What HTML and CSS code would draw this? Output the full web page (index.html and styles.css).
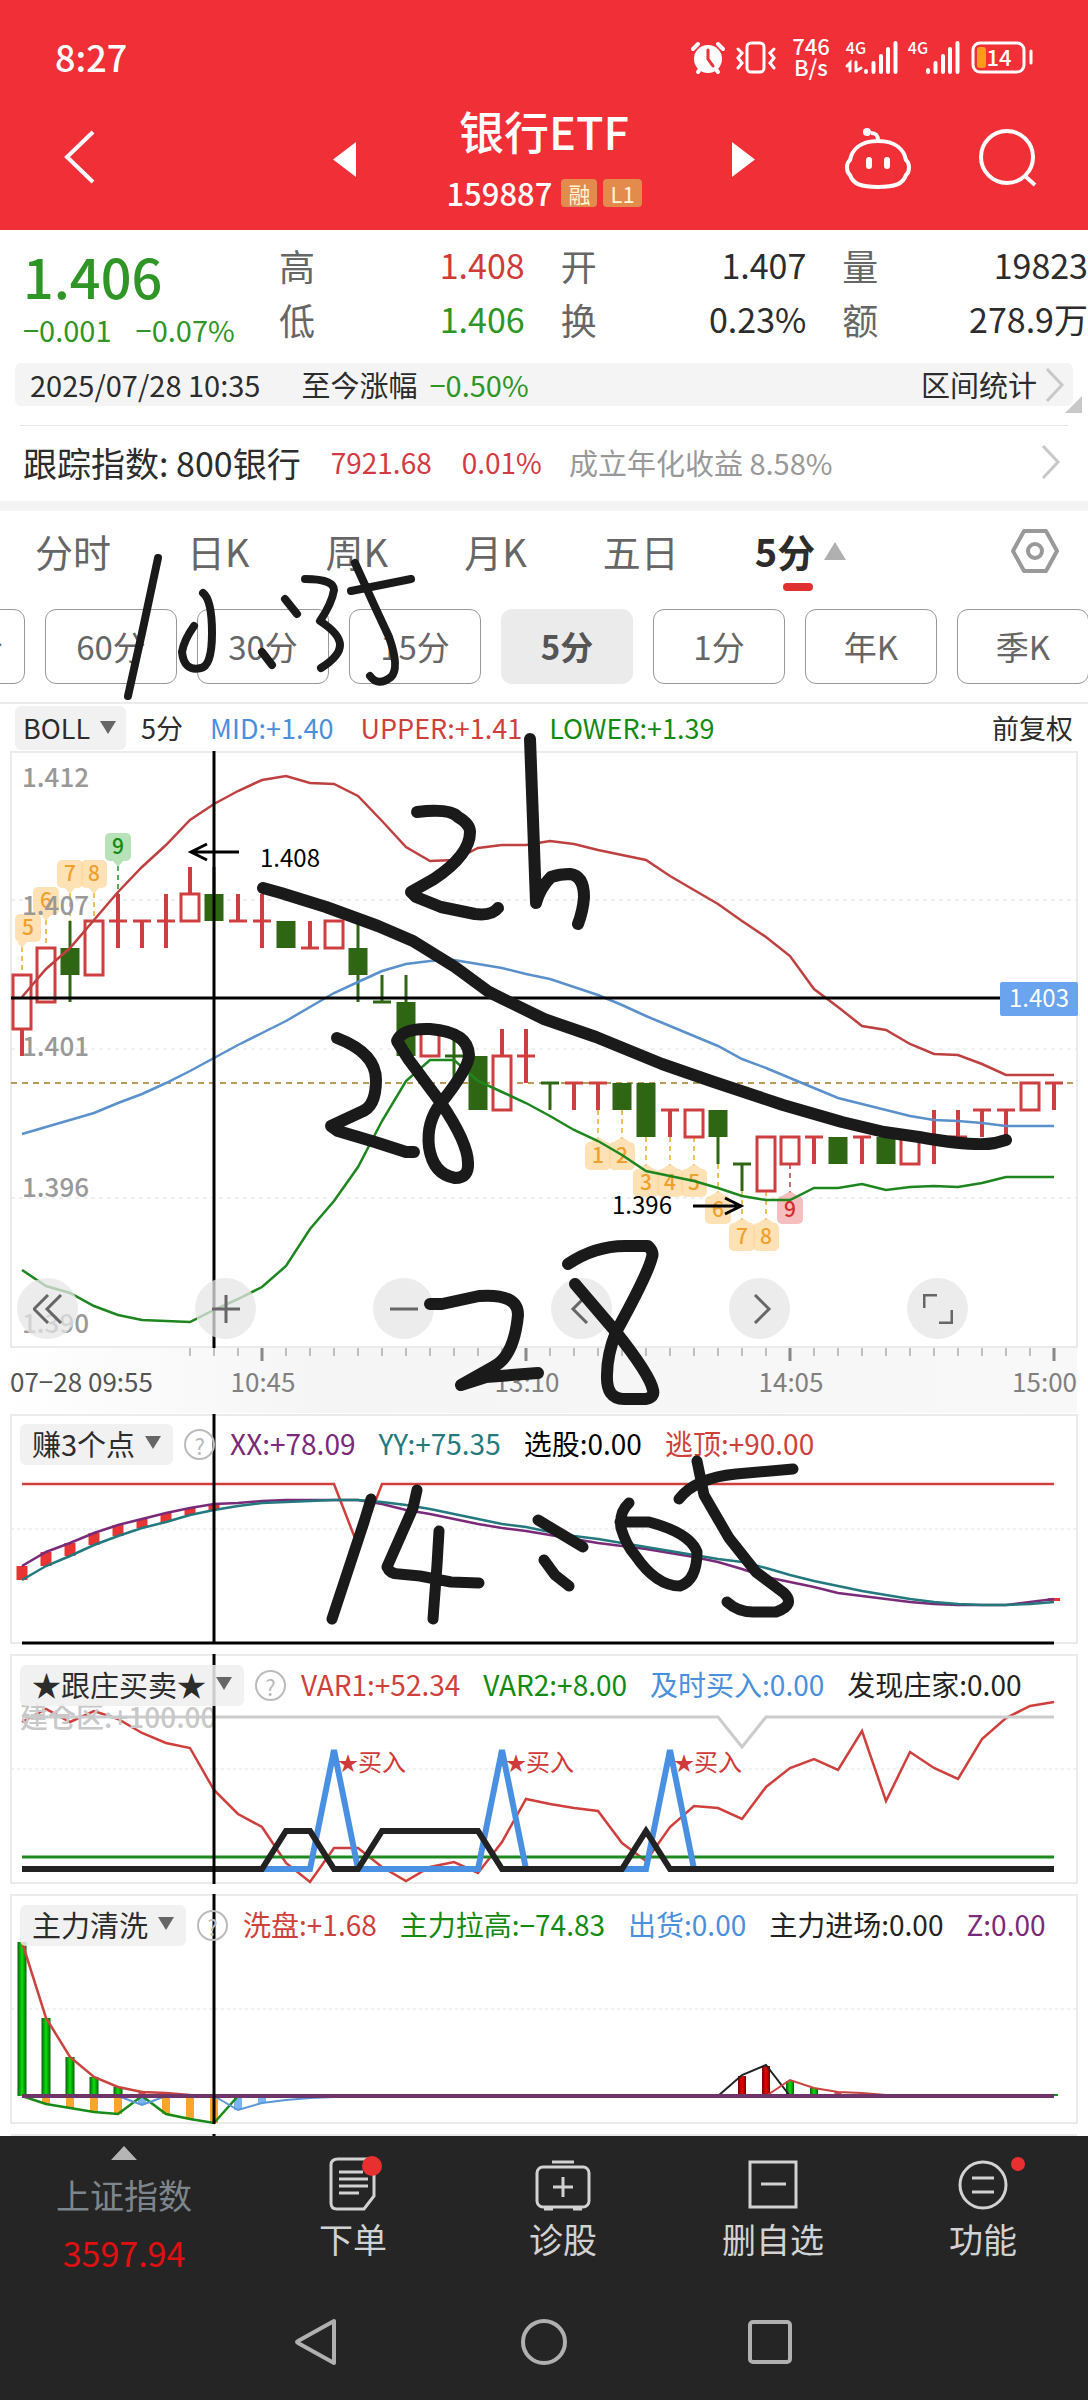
FILE: index.html
```html
<!DOCTYPE html>
<html lang="zh-CN">
<head>
<meta charset="utf-8">
<meta name="viewport" content="width=device-width, initial-scale=1">
<title>银行ETF 159887</title>
<link rel="stylesheet" href="styles.css">
</head>
<body>
<div class="page">
  <header class="header">
    <div class="status">
      <span class="clock">8:27</span>
      <svg class="status-icons" viewBox="680 30 360 56" aria-label="手机状态">
        <g fill="#fff" stroke="#fff" stroke-linecap="round">
          <circle cx="708" cy="59" r="14" stroke="none"/>
          <path d="M693 49l5-5M723 49l-5-5M698 72l3-4M718 72l-3-4" stroke-width="4"/>
          <path d="M708 50v9l5 7" fill="none" stroke="#f12f37" stroke-width="3"/>
          <g fill="none" stroke-width="3"><rect x="747" y="43" width="17" height="29" rx="4"/><path d="M738 49l4 4-4 5 4 5-4 5M774 49l-4 4 4 5-4 5 4 5" stroke-width="3"/></g>
          <path d="M866 71v1M873.500 63v9M881 56v16M888 49v23M895.500 43v29M928 70v2M935.500 63v9M943 56v16M950 49v23M957.500 43v29" stroke-width="4"/>
          <path d="M850 71v-8l-3 3M856 62v9M856 71l5-3" fill="none" stroke-width="3"/>
          <g fill="none" stroke-width="3"><rect x="973" y="43" width="51" height="29" rx="7"/><path d="M1031 51v12"/></g>
        </g>
        <rect x="977" y="47" width="9" height="21" rx="3" fill="#ff9a1f"/>
        <g class="status-text"><text x="811" y="55" class="t22">746</text><text x="811" y="76" class="t22">B/s</text><text x="856" y="54" class="t16">4G</text><text x="918" y="54" class="t16">4G</text><text x="999" y="66" class="t22">14</text></g>
      </svg>
    </div>
    <nav class="titlebar">
      <div class="title-left">
        <button class="icon-btn" aria-label="返回"><svg width="32" height="54" viewBox="0 0 32 54"><path d="M29 2L3 27l26 25" fill="none" stroke="#fff" stroke-width="4"/></svg></button>
      </div>
      <div class="title-mid">
        <button class="icon-btn" aria-label="上一只"><svg width="23" height="35" viewBox="0 0 23 35"><path d="M23 0v35L0 17.500z" fill="#fff"/></svg></button>
        <div class="title-text">
          <h1>银行ETF</h1>
          <div class="code"><span>159887</span><i class="badge">融</i><i class="badge">L1</i></div>
        </div>
        <button class="icon-btn" aria-label="下一只"><svg width="23" height="35" viewBox="0 0 23 35"><path d="M0 0v35l23-17.500z" fill="#fff"/></svg></button>
      </div>
      <div class="title-right">
        <button class="icon-btn" aria-label="智能助手"><svg width="68" height="62" viewBox="0 0 68 62"><g fill="none" stroke="#fff" stroke-width="4"><path d="M34 14c-18 0-26 9-28 19-4 3-4 12 0 15 3 9 11 12 28 12s25-3 28-12c4-3 4-12 0-15-2-10-10-19-28-19zM34 14c0-6-2-8-7-8"/><path d="M25 33v6M43 33v6" stroke-width="6" stroke-linecap="round"/></g><circle cx="23" cy="5" r="4" fill="#fff"/></svg></button>
        <button class="icon-btn" aria-label="搜索"><svg width="60" height="60" viewBox="0 0 60 60"><circle cx="29" cy="29" r="26" fill="none" stroke="#fff" stroke-width="4"/><path d="M47 48l10 9" stroke="#fff" stroke-width="4"/></svg></button>
      </div>
    </nav>
  </header>

  <section class="quote">
    <div class="price">
      <strong>1.406</strong>
      <div class="change"><span>−0.001</span><span>−0.07%</span></div>
    </div>
    <dl class="stats">
      <div><dt>高</dt><dd class="up">1.408</dd></div>
      <div><dt>开</dt><dd>1.407</dd></div>
      <div><dt>量</dt><dd>19823</dd></div>
      <div><dt>低</dt><dd class="down">1.406</dd></div>
      <div><dt>换</dt><dd>0.23%</dd></div>
      <div><dt>额</dt><dd>278.9万</dd></div>
    </dl>
  </section>

  <a class="range" href="#range">
    <span>2025/07/28 10:35</span>
    <span class="range-label">至今涨幅</span>
    <span class="down">−0.50%</span>
    <span class="push">区间统计</span>
    <svg width="20" height="34" viewBox="0 0 20 34"><path d="M2 1l15 16L2 33" fill="none" stroke="#c8c8c8" stroke-width="3"/></svg>
    <svg class="corner" width="17" height="17" viewBox="0 0 17 17"><path d="M17 0v17H0z" fill="#c8c8c8"/></svg>
  </a>

  <a class="track" href="#index">
    <span class="track-name">跟踪指数: 800银行</span>
    <span class="track-val">7921.68</span>
    <span class="track-pct">0.01%</span>
    <span class="track-year">成立年化收益 8.58%</span>
    <svg width="20" height="34" viewBox="0 0 20 34"><path d="M2 1l15 16L2 33" fill="none" stroke="#c8c8c8" stroke-width="3"/></svg>
  </a>

  <nav class="tabs">
    <button>分时</button><button>日K</button><button>周K</button><button>月K</button><button>五日</button>
    <button class="active">5分<svg width="22" height="18" viewBox="0 0 22 18"><path d="M11 0l11 18H0z" fill="#b0b0b0"/></svg></button>
    <button class="settings" aria-label="设置"><svg width="48" height="44" viewBox="0 0 48 44"><g fill="none" stroke="#999" stroke-width="4" stroke-linejoin="round"><path d="M13 2h22l11 20-11 20H13L2 22z"/><circle cx="24" cy="22" r="7"/></g></svg></button>
  </nav>

  <div class="periods">
    <button>120分</button><button>60分</button><button>30分</button><button>15分</button><button class="on">5分</button><button>1分</button><button>年K</button><button>季K</button>
  </div>

  <div class="boll">
    <button class="tag">BOLL<span class="caret"></span></button>
    <span>5分</span>
    <span class="c-blue">MID:+1.40</span>
    <span class="c-red">UPPER:+1.41</span>
    <span class="c-green">LOWER:+1.39</span>
    <span class="push">前复权</span>
  </div>

  <section class="main-chart">
    <svg id="kline" class="chart" viewBox="0 750 1088 663" aria-label="5分钟K线"></svg>
    <div class="tools">
      <button aria-label="最左"><svg viewBox="0 0 30 30"><path d="M15 1L1 15l14 14M28 1L14 15l14 14"/></svg></button>
      <button aria-label="放大"><svg viewBox="0 0 30 30"><path d="M1 15h28M15 1v28"/></svg></button>
      <button aria-label="缩小"><svg viewBox="0 0 30 30"><path d="M1 15h28"/></svg></button>
      <button aria-label="向左"><svg viewBox="0 0 30 30"><path d="M20 1L6 15l14 14"/></svg></button>
      <button aria-label="向右"><svg viewBox="0 0 30 30"><path d="M10 1l14 14-14 14"/></svg></button>
      <button aria-label="全屏"><svg viewBox="0 0 30 30"><path d="M1 14V1h13M29 16v13H16"/></svg></button>
    </div>
  </section>

  <section class="panel">
    <svg id="ind1" class="chart" viewBox="0 1413 1088 241" aria-label="赚3个点"></svg>
    <div class="legend">
      <button class="tag">赚3个点<span class="caret"></span></button><button class="help" aria-label="说明">?</button>
      <span class="c-purple">XX:+78.09</span><span class="c-teal">YY:+75.35</span><span class="c-black">选股:0.00</span><span class="c-red">逃顶:+90.00</span>
    </div>
  </section>

  <section class="panel">
    <svg id="ind2" class="chart" viewBox="0 1654 1088 240" aria-label="跟庄买卖"></svg>
    <div class="legend">
      <button class="tag">★跟庄买卖★<span class="caret"></span></button><button class="help" aria-label="说明">?</button>
      <span class="c-red">VAR1:+52.34</span><span class="c-green">VAR2:+8.00</span><span class="c-blue">及时买入:0.00</span><span class="c-dark">发现庄家:0.00</span>
    </div>
  </section>

  <section class="panel">
    <svg id="ind3" class="chart" viewBox="0 1894 1088 242" aria-label="主力清洗"></svg>
    <div class="legend">
      <button class="tag">主力清洗<span class="caret"></span></button><button class="help" aria-label="说明">?</button>
      <span class="c-red">洗盘:+1.68</span><span class="c-green">主力拉高:−74.83</span><span class="c-blue">出货:0.00</span><span class="c-dark">主力进场:0.00</span><span class="c-purple">Z:0.00</span>
    </div>
  </section>

  <footer class="footer">
    <nav class="actions">
      <a class="index" href="#sh"><svg width="26" height="14" viewBox="0 0 26 14"><path d="M13 0l13 14H0z" fill="#b5b5b5"/></svg><span>上证指数</span><b>3597.94</b></a>
      <a href="#order"><svg width="60" height="60" viewBox="0 0 60 60"><g fill="none" stroke="#d2d2d2" stroke-width="3"><path d="M15 5h30q6 0 6 6v31L41 55H14q-6 0-6-6V11q0-6 7-6z"/><path d="M16 18h24M16 25h29M16 32h29M16 39h20"/></g><circle cx="49" cy="12" r="10" fill="#e93030"/></svg><span>下单</span></a>
      <a href="#diagnose"><svg width="60" height="60" viewBox="0 0 60 60"><g fill="none" stroke="#d2d2d2" stroke-width="3"><rect x="4" y="13" width="52" height="40" rx="6"/><path d="M19 8h22M30 23v20M20 33h20M11 55h9M40 55h9"/></g></svg><span>诊股</span></a>
      <a href="#remove"><svg width="60" height="60" viewBox="0 0 60 60"><path d="M7 8h46v45H7zM18 30h25" fill="none" stroke="#d2d2d2" stroke-width="3"/></svg><span>删自选</span></a>
      <a href="#more"><svg width="90" height="60" viewBox="0 0 90 60"><g fill="none" stroke="#d2d2d2" stroke-width="3"><circle cx="45" cy="31" r="23"/><path d="M34 24h22M34 38h22"/></g><circle cx="80" cy="10" r="7" fill="#e93030"/></svg><span>功能</span></a>
    </nav>
    <nav class="system">
      <button class="icon-btn" aria-label="后退"><svg width="48" height="48" viewBox="0 0 48 48"><path d="M40 3v42L4 25q-2-1 0-2z" fill="none" stroke="#b0b0b0" stroke-width="4" stroke-linejoin="round"/></svg></button>
      <button class="icon-btn" aria-label="主页"><svg width="48" height="48" viewBox="0 0 48 48"><circle cx="24" cy="24" r="21" fill="none" stroke="#b0b0b0" stroke-width="4"/></svg></button>
      <button class="icon-btn" aria-label="最近任务"><svg width="48" height="48" viewBox="0 0 48 48"><rect x="4" y="4" width="40" height="40" rx="3" fill="none" stroke="#b0b0b0" stroke-width="4"/></svg></button>
    </nav>
  </footer>

  <svg class="ink" viewBox="0 0 1088 2400" aria-hidden="true">
    <g stroke-width="8">
      <path d="M158 558L142 633 128 696"/>
      <path d="M203 593Q212 600 212 633T201 668Q184 672 182 652 184 640 194 626"/>
      <path d="M285 599L297 614M262 652L272 665"/>
      <path d="M305 579Q334 579 334 590 332 603 320 621 340 634 340 645T321 668"/>
      <path d="M355 563L375 607 389 637Q400 668 391 677 378 687 370 676M351 591L411 579"/>
    </g>
    <g stroke-width="11">
      <path d="M371 1499L364 1522 332 1619M417 1490L413 1508 387 1567Q390 1574 399 1574L420 1576 451 1582 479 1583M439 1531L437 1565 433 1619"/>
      <path d="M538 1520L583 1547M544 1560L555 1575 569 1586"/>
      <path d="M629 1503Q619 1512 621 1528 626 1545 635 1555 656 1586 680 1586 697 1580 697 1552 690 1533 649 1522L620 1522"/>
      <path d="M697 1461L704 1495 729 1538 756 1572 784 1593Q796 1605 776 1612H753Q738 1612 727 1602M679 1499Q695 1478 736 1474L793 1469"/>
    </g>
    <g stroke-width="12">
      <path d="M530 739L533 820 536 903Q540 888 551 877 560 874 570 874 584 876 584 897 583 911 578 924"/>
      <path d="M417 812Q450 808 458 817 470 824 470 832 470 855 434 879L411 892 416 897 441 907 475 914Q492 916 498 908"/>
      <path d="M263 888L281 893 326 907 378 926 413 941 455 967 489 992 544 1019 596 1037 662 1064 711 1081 783 1105 842 1122 884 1132 919 1137Q975 1147 995 1143L1006 1140"/>
      <path d="M337 1038Q376 1053 376 1080T361 1112L331 1126 338 1131 375 1142 406 1152H414"/>
      <path d="M397 1041Q402 1028 430 1029 468 1032 469 1055 469 1068 441 1103 426 1122 429 1147 433 1174 455 1178 469 1178 468 1163 468 1143 441 1103L409 1060z"/>
      <path d="M430 1304H442L479 1296Q518 1293 518 1315 514 1357 493 1367L461 1385 486 1377 538 1373"/>
      <path d="M568 1264Q595 1246 625 1246H648Q654 1252 652 1257 648 1274 616 1332 607 1355 607 1375 606 1399 624 1399H646Q655 1397 653 1390 650 1375 616 1332L575 1284"/>
    </g>
  </svg>
</div>
<script src="charts.js"></script>
</body>
</html>
```
FILE: styles.css
```css
* { box-sizing: border-box; }

body {
  margin: 0;
  background: #fff;
  color: #2c2c2c;
  font-family: "Noto Sans CJK SC", sans-serif;
}

.page { position: relative; overflow: hidden; }

button {
  margin: 0;
  padding: 0;
  border: 0;
  background: none;
  color: inherit;
  font: inherit;
}

a { color: inherit; text-decoration: none; }
svg { display: block; flex: none; }
.icon-btn { display: flex; }
.push { margin-left: auto; }

.up { color: #cf3a3a; }
.down { color: #2f9526; }
.c-red { color: #cf3f3c; }
.c-green { color: #138a13; }
.c-blue { color: #4a8fdc; }
.c-purple { color: #7a2a78; }
.c-teal { color: #23797e; }
.c-dark { color: #222; }
.c-black { color: #000; }

/* header */
.header { height: 230px; background: #f12f37; color: #fff; }

.status {
  display: flex;
  justify-content: space-between;
  align-items: flex-start;
  padding: 30px 48px 0 55px;
}
.clock { font-size: 36px; line-height: 52px; font-weight: 500; }
.status-icons { width: 360px; height: 56px; }
.status-text { fill: #fff; text-anchor: middle; font-weight: 500; }
.t22 { font-size: 22px; }
.t16 { font-size: 16px; }

.titlebar { display: grid; grid-template-columns: 1fr 422px 1fr; height: 144px; }
.title-left { display: flex; align-items: center; padding: 0 0 2px 64px; }
.title-mid { display: flex; align-items: center; justify-content: space-between; padding-top: 2px; }
.title-right { display: flex; align-items: center; justify-content: flex-end; gap: 66px; padding: 0 50px 0 0; }
.title-text { text-align: center; margin-top: 4px; }
.title-mid h1 { margin: 0; font-size: 45px; line-height: 64px; font-weight: 500; }
.code { display: flex; align-items: center; justify-content: center; gap: 6px; font-size: 31px; line-height: 60px; font-weight: 500; }
.code span { margin-right: 3px; }
.badge {
  padding: 0 7px;
  border-radius: 4px;
  background: #e38b4d;
  color: #fff3d6;
  font-size: 22px;
  line-height: 28px;
  font-style: normal;
  font-weight: 400;
}

/* quote */
.quote { display: flex; height: 133px; padding-top: 8px; }
.price { width: 279px; flex: none; padding-left: 23px; color: #2f9526; }
.price strong { display: block; font-size: 54px; line-height: 75px; font-weight: 500; }
.change { display: flex; gap: 24px; font-size: 29px; line-height: 32px; }
.stats {
  flex: 1;
  display: grid;
  grid-template-columns: repeat(3, 1fr);
  column-gap: 36px;
  align-content: start;
  margin: 0;
  line-height: 54px;
}
.stats div { display: flex; justify-content: space-between; }
.stats dt { font-size: 36px; color: #666; }
.stats dd { margin: 0; font-size: 34px; }

.range {
  position: relative;
  display: flex;
  align-items: center;
  height: 43px;
  margin: 0 15px;
  padding: 0 8px 0 15px;
  border-radius: 6px;
  background: #f4f4f4;
  font-size: 29px;
  line-height: 40px;
}
.range > span { padding-bottom: 2px; }
.range-label { margin: 0 12px 0 41px; }
.range > svg { margin-left: 8px; }
.range .corner { position: absolute; right: -9px; bottom: -7px; }

.track {
  display: flex;
  align-items: center;
  height: 105px;
  padding: 17px 27px 0 23px;
  background: linear-gradient(#e6e6e6, #e6e6e6) center 19px / calc(100% - 40px) 1px no-repeat;
  border-bottom: 10px solid #f4f4f4;
  font-size: 28px;
}
.track-name { font-size: 34px; }
.track-val { margin-left: 30px; color: #d43a44; }
.track-pct { margin-left: 30px; color: #d43a44; }
.track-year { margin: 0 auto 0 27px; color: #999; font-size: 29px; }

/* tabs */
.tabs {
  display: flex;
  align-items: center;
  gap: 76px;
  height: 98px;
  padding: 0 29px 19px 35px;
  color: #666;
  font-size: 38px;
  line-height: 50px;
}
.tabs .active {
  position: relative;
  display: flex;
  align-items: center;
  gap: 9px;
  color: #2c2c2c;
  font-weight: 700;
}
.tabs .active::after {
  content: "";
  position: absolute;
  left: 28px;
  bottom: -15px;
  width: 30px;
  height: 8px;
  border-radius: 4px;
  background: #e03131;
}
.tabs .settings { margin-left: auto; }

.periods {
  display: grid;
  grid-template-columns: repeat(8, 132px);
  gap: 20px;
  height: 93px;
  margin-left: -107px;
  align-items: start;
}
.periods button {
  height: 75px;
  border: 1px solid #999;
  border-radius: 11px;
  color: #666;
  font-size: 33px;
  line-height: 73px;
}
.periods .on { border-color: #ebebeb; background: #ebebeb; color: #555; font-weight: 700; }

.boll {
  display: flex;
  align-items: center;
  gap: 27px;
  height: 48px;
  padding: 1px 15px 0;
  border-top: 2px solid #ebebeb;
  font-size: 27px;
}
.boll > span:nth-child(2) { margin-left: -12px; }
.boll .tag { height: 44px; padding: 0 10px 0 8px; }

.tag {
  display: flex;
  align-items: center;
  gap: 10px;
  height: 41px;
  padding: 0 12px;
  border-radius: 6px;
  background: rgb(238 238 238 / 85%);
}
.caret { border: 8px solid transparent; border-top: 13px solid #666; border-bottom: 0; }

/* charts */
.chart { width: 100%; height: auto; }
.chart text { font-family: "Noto Sans CJK SC", sans-serif; }
.axis-label { fill: #999; font-size: 26px; font-weight: 500; }
.time-label { fill: #808080; font-size: 26px; }
.first { fill: #555; }
.mark { font-size: 24px; }
.count { font-size: 21px; font-weight: 500; text-anchor: middle; }
.signal { fill: #cf3a3a; font-size: 24px; }
.zone { fill: #c8c8c8; font-size: 28px; font-weight: 500; }

.main-chart { position: relative; }
.tools { position: absolute; left: 17px; bottom: 74px; display: flex; gap: 117px; }
.tools button {
  display: grid;
  place-items: center;
  width: 61px;
  height: 61px;
  border-radius: 50%;
  background: rgb(230 230 230 / 75%);
}
.tools svg { width: 30px; height: 30px; fill: none; stroke: #666; stroke-width: 3; }

.panel { display: grid; }
.panel > * { grid-area: 1 / 1; min-width: 0; }
.legend {
  display: flex;
  align-items: center;
  gap: 23px;
  height: 41px;
  margin: 11px 0 0 20px;
  font-size: 28px;
  line-height: 36px;
  white-space: nowrap;
}
.legend > span { padding-bottom: 4px; }
.legend .tag { padding-bottom: 4px; font-size: 29px; }
.help {
  width: 31px;
  height: 31px;
  margin: 0 -8px 0 -12px;
  border: 2px solid #bbb;
  border-radius: 50%;
  color: #bbb;
  font-size: 22px;
  line-height: 26px;
}

/* footer */
.footer { background: #252525; color: #d2d2d2; }
.actions { display: grid; grid-template-columns: 248px repeat(4, 1fr); height: 154px; font-size: 34px; }
.actions a { display: flex; flex-direction: column; align-items: center; padding-top: 18px; }
.actions a span { line-height: 50px; }
.actions .index { padding: 10px 0 0; }
.actions .index span { margin-top: 10px; color: #7d868c; }
.actions .index b { margin-top: 8px; color: #e01010; font-weight: 400; line-height: 50px; }
.system { display: flex; justify-content: center; gap: 178px; height: 110px; padding-top: 28px; }

/* handwritten notes over the page */
.ink {
  position: absolute;
  top: 0;
  left: 0;
  width: 100%;
  height: auto;
  fill: none;
  stroke: #1a1a1a;
  stroke-linecap: round;
  stroke-linejoin: round;
  pointer-events: none;
}
```
FILE: charts.js
```js
const X = i => 22 + 24 * i;
const line = (ys, color, w = 2.5, from = 0) =>
  `<polyline points="${ys.map((y, i) => X(i + from) + ',' + y).join(' ')}" fill="none" stroke="${color}" stroke-width="${w}"/>`;
const seg = (x1, y1, x2, y2, color, w = 2, extra = '') =>
  `<line x1="${x1}" y1="${y1}" x2="${x2}" y2="${y2}" stroke="${color}" stroke-width="${w}" ${extra}/>`;
const bar = (i, y1, y2, w, color) =>
  `<rect x="${X(i) - w / 2}" y="${y1}" width="${w}" height="${y2 - y1}" fill="${color}"/>`;
const frame = (y, h) => `<rect x="11" y="${y}" width="1066" height="${h}" fill="none" stroke="#ebebeb" stroke-width="2"/>`;
const RED = '#cf3f3f', GREEN = '#2f6613', UPPER = '#bf4040', BLUE = '#5a90cc', LOWER = '#1e861e';
const draw = (id, parts) => { document.getElementById(id).innerHTML = parts.join(''); };

/* colour, body top, body bottom, high, low in ticks below the day's high */
const candles = [
  'r4647', 'r3535', 'g3425', 'r2424', 'r2213', 'r2223', 'r2213', 'r1202', 'g1202', 'r2212', 'r2213',
  'g2323', 'r3323', 'r2323', 'g3425', 'g5545', 'g5747', 'r6767', 'g7768', 'g7979', 'r7969', 'r7768',
  'g8889', 'r8889', 'r8889', 'g8989', 'g8a8a', 'r999a', 'r9a9a', 'g9a9b', 'gbbbc', 'racac', 'rabab',
  'raaab', 'gabab', 'raaab', 'gabab', 'rabab', 'raa9b', 'raa9a', 'r999a', 'r999a', 'r8989', 'r8889'
];
const K = c => 867 + 27 * parseInt(c, 16);
const candle = (s, i) => {
  const color = s[0] === 'r' ? RED : GREEN, x = X(i);
  const [t, b, h, l] = [1, 2, 3, 4].map(n => K(s[n]));
  let out = '';
  const wick = s[0] === 'r' ? 4 : 3;
  if (h < t) out += seg(x, h, x, t, color, wick);
  if (l > b) out += seg(x, b, x, l, color, wick);
  if (t === b) return out + seg(x - 9, t, x + 9, t, color, 3);
  return out + (s[0] === 'r'
    ? `<rect x="${x - 9}" y="${t}" width="18" height="${b - t}" fill="#fff" stroke="${color}" stroke-width="3"/>`
    : bar(i, t, b, 19, color));
};

const upper = [997,969,948,920,892,867,845,820,804,791,780,776,783,784,796,821,847,861,860,848,845,845,841,844,850,855,860,876,890,904,921,937,956,989,1007,1026,1030,1044,1054,1055,1064,1075,1075,1075];
const mid = [1134,1127,1120,1113,1103,1094,1083,1071,1058,1045,1033,1021,1007,993,982,971,964,961,960,964,968,974,979,987,995,1005,1016,1026,1036,1046,1059,1068,1078,1088,1098,1104,1110,1116,1120,1121,1123,1126,1126,1126];
const lower = [1270,1286,1293,1306,1315,1320,1321,1322,1310,1299,1287,1266,1229,1201,1167,1121,1081,1060,1060,1081,1092,1103,1116,1130,1141,1155,1171,1176,1181,1188,1196,1200,1200,1188,1188,1184,1190,1187,1186,1187,1183,1177,1177,1177];

const tones = {
  o: ['#ffd79e', '#f0a02c', '#e8c060'],
  g: ['#9fd79f', '#128a12', '#5aa85a'],
  r: ['#f3a9a9', '#d02c2c', '#c07070']
};
/* index, digit, top of the box, end of the leader line, tone, x shift of the box */
const counts = [
  [0, 5, 914, 975, 'o', 6], [1, 6, 887, 948, 'o', 0], [2, 7, 860, 921, 'o', 0], [3, 8, 860, 921, 'o', 0], [4, 9, 833, 894, 'g', 0],
  [24, 1, 1142, 1110, 'o', 0], [25, 2, 1142, 1110, 'o', 0], [26, 3, 1169, 1137, 'o', 0], [27, 4, 1169, 1137, 'o', 0], [28, 5, 1169, 1137, 'o', 0],
  [29, 6, 1196, 1164, 'o', 0], [30, 7, 1223, 1191, 'o', 0], [31, 8, 1223, 1191, 'o', 0], [32, 9, 1196, 1164, 'r', 0]
];
const count = ([i, n, y, end, tone, dx]) => {
  const [bg, fg, dash] = tones[tone], x = X(i), above = end > y;
  const tip = above ? `M${x - 5} ${y + 28}l5 6 5-6z` : `M${x - 8} ${y}l8-5 8 5z`;
  return seg(x, above ? y + 33 : end, x, above ? end : y - 3, dash, 2, 'stroke-dasharray="5 4"') +
    `<g fill="${bg}" opacity=".75"><rect x="${x + dx - 13}" y="${y}" width="26" height="28" rx="5"/><path d="${tip}"/></g>` +
    `<text class="count" x="${x + dx}" y="${y + 21}" fill="${fg}">${n}</text>`;
};

const ticks = Array.from({ length: 37 }, (_, n) => {
  const major = n % 11 === 3, x = 190 + 24 * n;
  return seg(x, 1348, x, major ? 1361 : 1356, '#888', major ? 3 : 1);
});

draw('kline', [
  `<defs><linearGradient id="fade"><stop offset="0" stop-color="#fff"/><stop offset=".3" stop-color="#f5f5f5"/><stop offset="1" stop-color="#f8f8f8"/></linearGradient></defs>`,
  `<rect x="0" y="1347" width="1077" height="66" fill="url(#fade)"/>`,
  frame(752, 595),
  ...[900, 1049, 1198].map(y => seg(11, y, 1077, y, '#e2e2e2', 1, 'stroke-dasharray="4 4"')),
  seg(11, 1083, 1077, 1083, '#b99a5b', 2, 'stroke-dasharray="6 5"'),
  ...counts.map(count),
  ...candles.map(candle),
  line(upper, UPPER), line(mid, BLUE), line(lower, LOWER),
  ...[['1.412', 787], ['1.407', 915], ['1.401', 1056], ['1.396', 1197], ['1.390', 1333]].map(([t, y]) => `<text class="axis-label" x="22" y="${y}">${t}</text>`),
  seg(214, 751, 214, 1348, '#000', 3), seg(11, 998, 1000, 998, '#000', 3),
  `<path d="M239 852h-48M207 844l-16 8 16 8M693 1206h48M725 1198l16 8-16 8" fill="none" stroke="#000" stroke-width="3"/>`,
  `<text class="mark" x="260" y="867">1.408</text><text class="mark" x="612" y="1214">1.396</text>`,
  `<rect x="1000" y="982" width="78" height="34" rx="2" fill="#6aa3ee"/><text class="mark" x="1009" y="1007" fill="#fff">1.403</text>`,
  ...ticks,
  `<text class="time-label first" x="10" y="1392">07−28 09:55</text>`,
  ...[['10:45', 263], ['13:10', 527], ['14:05', 791]].map(([t, x]) => `<text class="time-label" x="${x}" y="1392" text-anchor="middle">${t}</text>`),
  `<text class="time-label" x="1077" y="1392" text-anchor="end">15:00</text>`
]);

const xx = [1566,1552,1543,1533,1525,1519,1513,1508,1504,1503,1501,1500,1500,1500,1500,1504,1510,1514,1519,1524,1528,1531,1535,1539,1543,1546,1549,1553,1557,1562,1569,1577,1582,1587,1593,1596,1599,1602,1604,1605,1605,1605,1602,1599];
const yy = [1580,1566,1556,1545,1536,1528,1522,1515,1510,1506,1503,1502,1501,1500,1500,1502,1505,1509,1514,1519,1524,1527,1532,1536,1539,1543,1547,1551,1555,1559,1562,1568,1575,1581,1586,1591,1595,1599,1602,1604,1605,1605,1604,1602];
const dotted = y => seg(11, y, 1077, y, '#e2e2e2', 1, 'stroke-dasharray="3 3"');

draw('ind1', [
  frame(1415, 228), dotted(1529),
  ...xx.slice(0, 9).map((y, i) => bar(i, y, yy[i], 11, '#e93434')),
  bar(43, 1598, 1601, 12, '#e93434'),
  `<path d="M22 1484H334L358 1546 382 1484H1054" fill="none" stroke="#cf3f3c" stroke-width="2.5"/>`,
  line(xx, '#7a2a78'), line(yy, '#23797e'),
  seg(22, 1643, 1054, 1643, '#000', 3),
  seg(214, 1414, 214, 1644, '#000', 3)
]);

const var1 = [1722,1709,1722,1711,1719,1733,1743,1748,1790,1814,1827,1863,1882,1848,1848,1867,1881,1867,1862,1873,1842,1799,1804,1808,1811,1843,1861,1827,1806,1808,1819,1787,1768,1759,1770,1731,1801,1752,1768,1779,1739,1718,1706,1702];
const pick = (set, on, off) => var1.map((_, i) => set.includes(i) ? on : off);

draw('ind2', [
  frame(1655, 228), dotted(1769),
  line(var1, '#cf3f3c'),
  `<path d="M22 1717H718L742 1747 766 1717H1054" fill="none" stroke="#ccc" stroke-width="3"/>`,
  line(var1.map(() => 1857), '#1f8a1f', 3),
  line(pick([13, 20, 27], 1750, 1869), '#4a90e2', 6),
  line(pick([11, 12, 15, 16, 17, 18, 19, 26], 1831, 1869), '#222', 6),
  ...[338, 506, 674].map(x => `<text class="signal" x="${x}" y="1771"><tspan font-size="20">★</tspan>买入</text>`),
  `<text class="zone" x="20" y="1728">建仓区:+100.00</text>`,
  seg(214, 1654, 214, 1884, '#000', 3)
]);

draw('ind3', [
  `<defs><linearGradient id="gbar"><stop offset="0" stop-color="#076007"/><stop offset=".5" stop-color="#0be00b"/><stop offset="1" stop-color="#076007"/></linearGradient>`,
  `<linearGradient id="rbar"><stop offset="0" stop-color="#700"/><stop offset=".5" stop-color="#e00"/><stop offset="1" stop-color="#700"/></linearGradient></defs>`,
  frame(1895, 228), dotted(2009),
  seg(11, 2135, 1077, 2135, '#ebebeb', 2),
  ...[1942, 2018, 2057, 2077, 2087].map((y, i) => bar(i, y, 2096, 9, 'url(#gbar)')),
  bar(5, 2092, 2096, 7, '#d05050'),
  ...[[1, 2104], [2, 2108], [3, 2112], [4, 2114], [6, 2114], [7, 2119], [8, 2123]].map(([i, y]) => bar(i, 2096, y, 8, '#ffa42c')),
  ...[[5, 2104], [9, 2110], [10, 2103]].map(([i, y]) => bar(i, 2096, y, 8, '#7ab4f5')),
  bar(30, 2076, 2096, 8, 'url(#rbar)'), bar(31, 2066, 2096, 8, 'url(#rbar)'),
  bar(32, 2081, 2096, 8, 'url(#gbar)'), bar(33, 2088, 2096, 8, 'url(#gbar)'), bar(34, 2092, 2096, 7, '#d05050'),
  line([1942, 2018, 2057, 2077, 2087, 2092, 2093, 2095, 2096], '#c94440'),
  line([2096, 2104, 2108, 2112, 2114, 2096, 2114, 2119, 2123, 2096], '#178a17'),
  line([2096, 2105, 2096], '#5a96d8', 2, 4),
  line([2096, 2110, 2103, 2100, 2098, 2097, 2096], '#5a96d8', 2, 8),
  line([2096, 2075, 2065, 2096], '#222', 2, 29),
  line([2096, 2080, 2088, 2092, 2093, 2095, 2096], '#c94440', 2, 31),
  seg(1054, 2095, 1058, 2095, '#1f8a1f', 2),
  seg(22, 2096, 1054, 2096, '#6f3468', 4),
  seg(214, 1894, 214, 2124, '#000', 3), seg(214, 2134, 214, 2136, '#000', 3)
]);
```
